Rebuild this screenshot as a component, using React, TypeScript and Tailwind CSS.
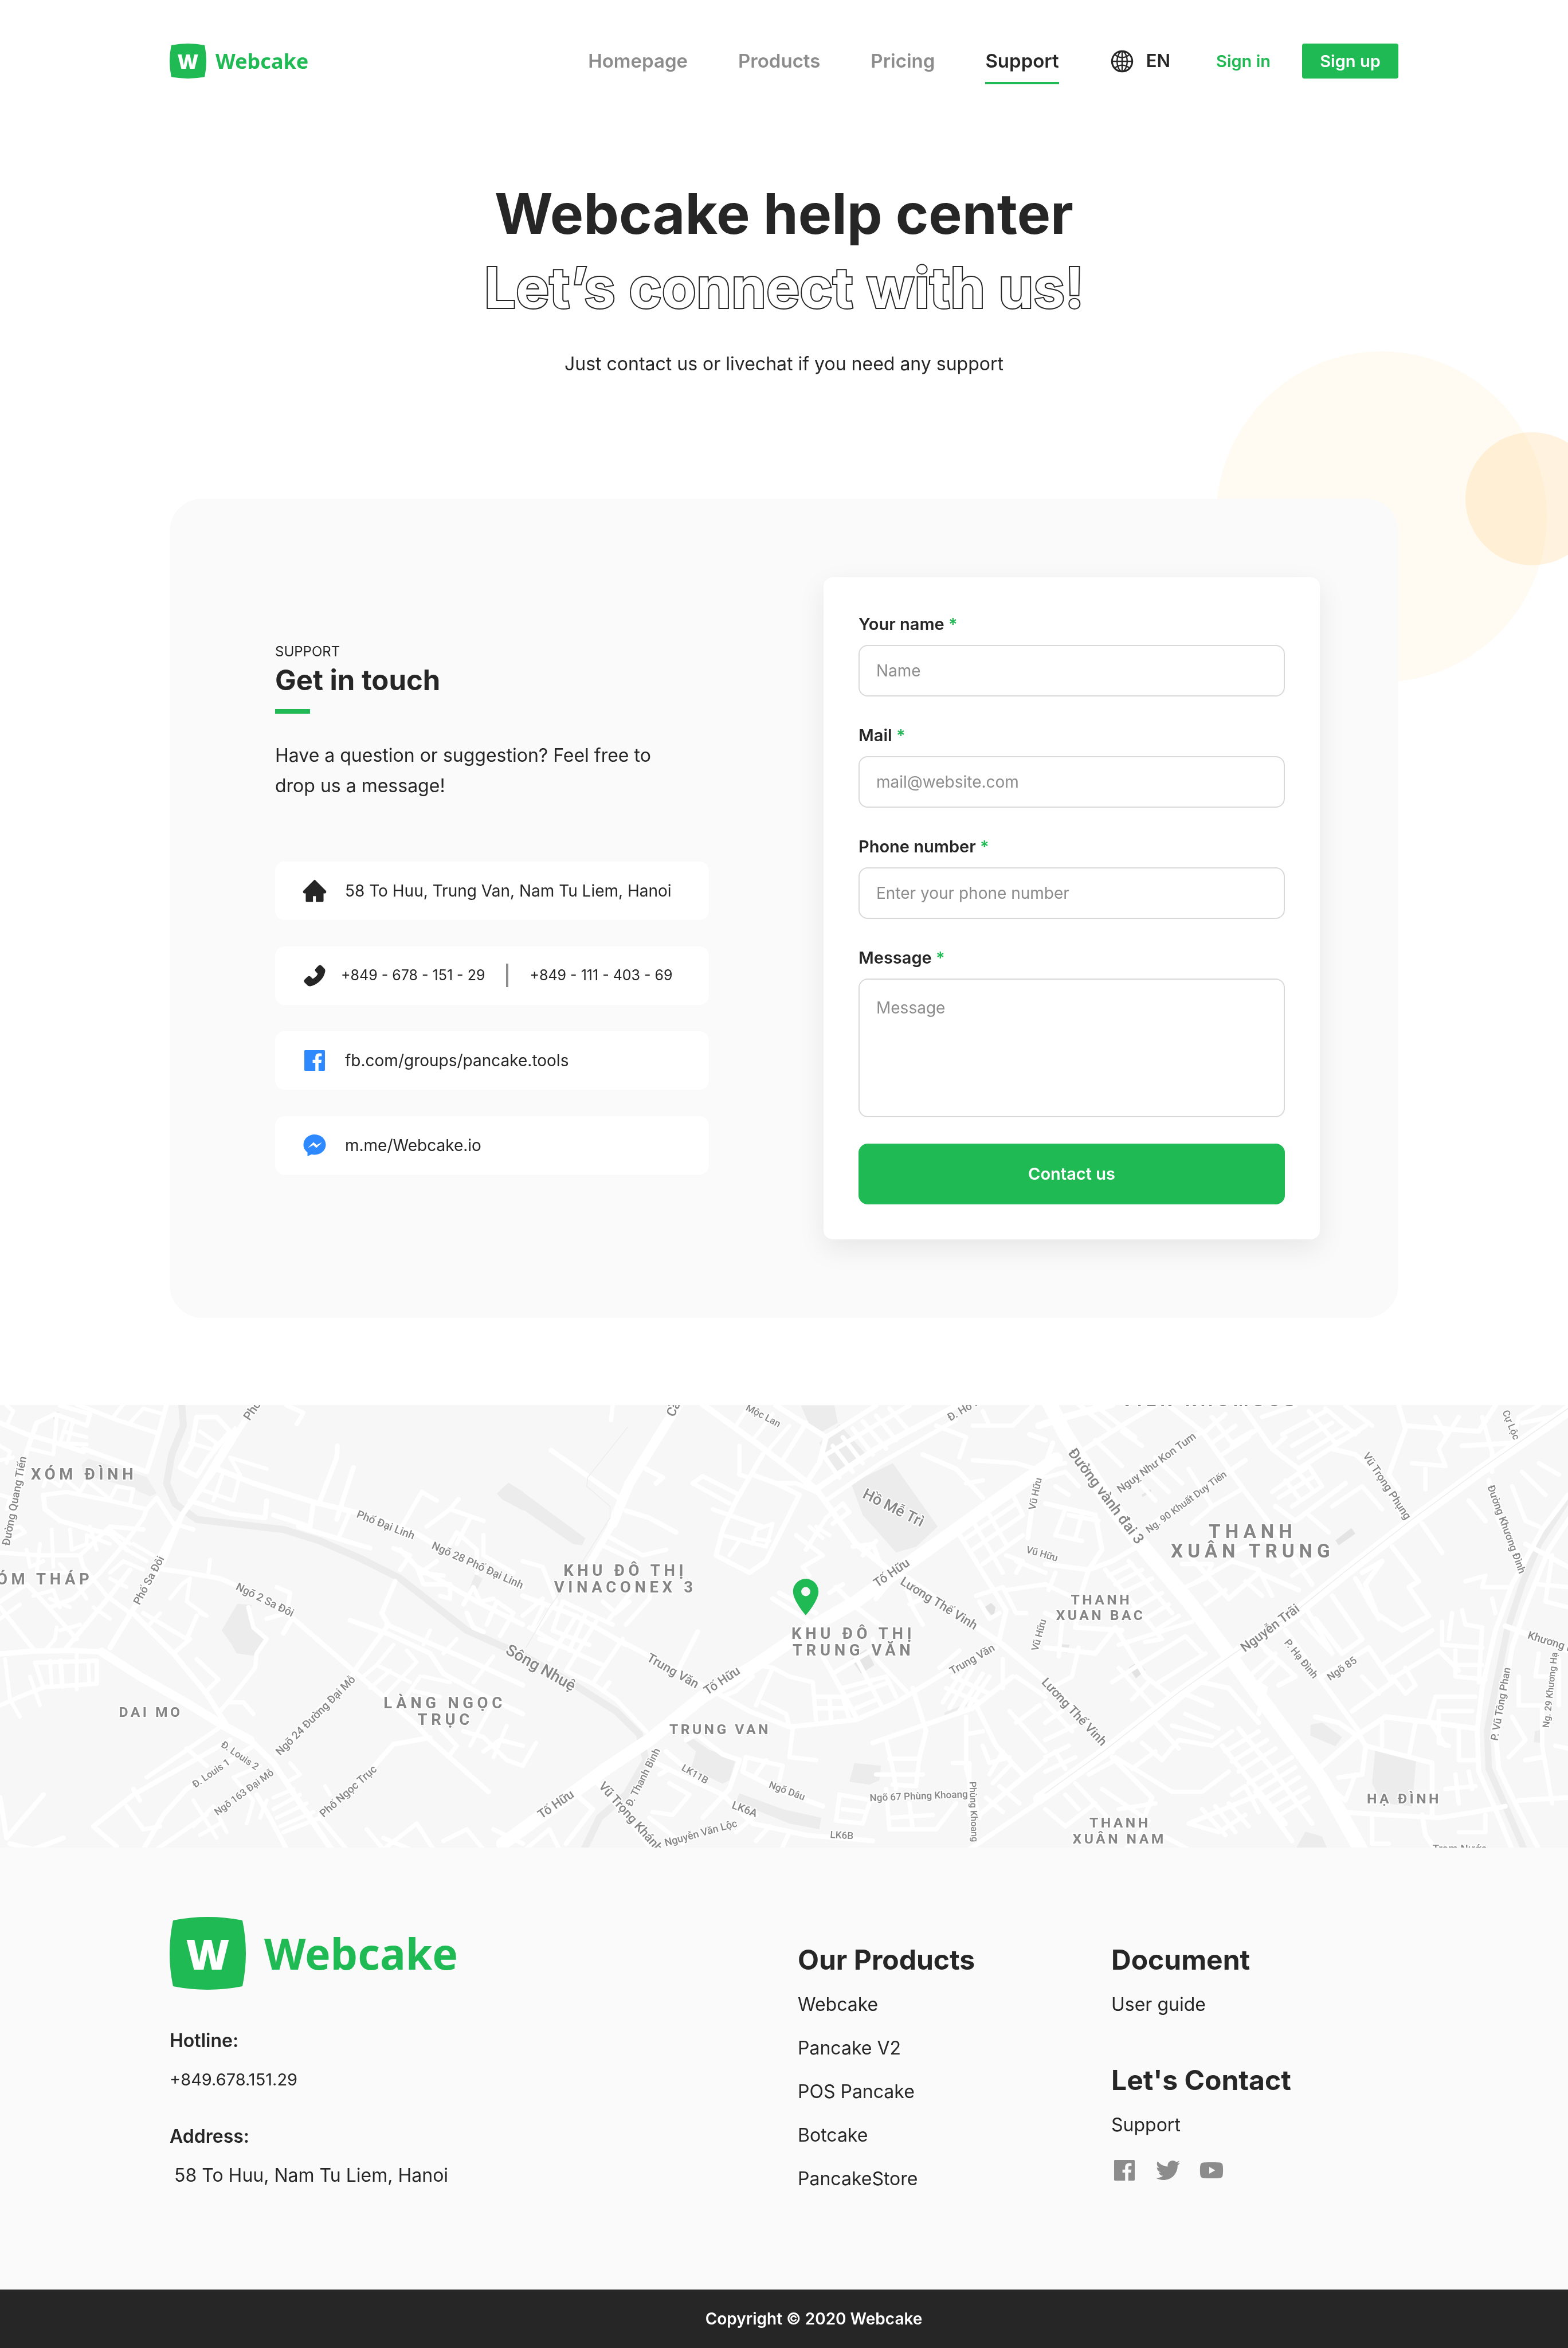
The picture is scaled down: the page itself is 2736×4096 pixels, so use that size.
import type { ReactNode } from "react";
import {
  AiFillFacebook,
  AiFillHome,
  AiFillPhone,
  AiFillYoutube,
  AiOutlineGlobal,
} from "react-icons/ai";
import { FaTwitter } from "react-icons/fa";
import { MdLocationOn } from "react-icons/md";

/* ---------- logo ---------- */

function Logo({ large = false }: { large?: boolean }) {
  return (
    <a href="#" className={large ? "flex items-center gap-8" : "flex items-center gap-4"}>
      <span className={large ? "relative h-[127px] w-[133px]" : "relative h-[61px] w-16"}>
        <svg viewBox="0 0 140 134" preserveAspectRatio="none" className="size-full" aria-hidden="true">
          <path
            d="M8 8Q70 -4 132 8Q144 67 132 126Q70 138 8 126Q-4 67 8 8Z"
            fill="#1fba54"
            stroke="#1fba54"
            strokeWidth="4"
            strokeLinejoin="round"
          />
        </svg>
        <span
          className={
            large
              ? "absolute inset-0 flex items-center justify-center font-['Open_Sans'] text-[73px] leading-none font-extrabold text-white"
              : "absolute inset-0 flex items-center justify-center font-['Open_Sans'] text-[35px] leading-none font-extrabold text-white"
          }
        >
          W
        </span>
      </span>
      <span
        className={
          large
            ? "font-['Noto_Sans'] text-[75px] leading-none font-bold text-[#1fba54]"
            : "font-['Noto_Sans'] text-[36px] leading-none font-bold text-[#1fba54]"
        }
      >
        Webcake
      </span>
    </a>
  );
}

/* ---------- header ---------- */

function Header() {
  return (
    <header className="mx-auto flex h-[61px] w-full max-w-[2144px] items-center text-[33px] font-semibold text-[#262626]">
      <Logo />
      <nav className="ml-auto flex items-center gap-[88px] text-[#8c8c8c]">
        <a href="#">Homepage</a>
        <a href="#">Products</a>
        <a href="#">Pricing</a>
        <a href="#" className="relative text-[#262626]" aria-current="page">
          Support
          <span className="absolute inset-x-0 -bottom-4 h-1 bg-[#1fba54]" />
        </a>
      </nav>
      <button type="button" className="ml-[88px] flex items-center gap-5 text-[31px]">
        <AiOutlineGlobal className="size-[44px]" />
        EN
      </button>
      <a href="#" className="ml-[80px] text-[29px] text-[#1fba54]">
        Sign in
      </a>
      <button
        type="button"
        className="ml-[55px] h-[61px] w-[168px] rounded bg-[#1fba54] text-[29px] text-white"
      >
        Sign up
      </button>
    </header>
  );
}

/* ---------- contact ---------- */

function MessengerIcon() {
  return (
    <svg viewBox="0 0 46 46" className="size-[46px] text-[#2e89ff]" aria-hidden="true">
      <path
        d="M23 4C12 4 3.500 11.800 3.500 22c0 5.500 2.700 10 7 13.200V42l7.200-3.300c1.700.5 3.500.7 5.300.7 11 0 19.500-7.700 19.500-17.400S34 4 23 4Z"
        fill="currentColor"
      />
      <path d="m11 27.500 10-10 5.500 5L36 17.500 26 27.500l-5.200-5Z" fill="#fff" />
    </svg>
  );
}

function InfoRow({ icon, children, tight = false }: { icon: ReactNode; children: ReactNode; tight?: boolean }) {
  return (
    <li
      className={
        tight
          ? "flex h-[102px] items-center gap-[23px] rounded-2xl bg-white pl-[46px] text-[25px]"
          : "flex h-[102px] items-center gap-[30px] rounded-2xl bg-white pl-[46px] text-[28px]"
      }
    >
      {icon}
      {children}
    </li>
  );
}

function GetInTouch() {
  return (
    <div className="w-[757px] self-center">
      <p className="text-[24px] leading-[32px]">SUPPORT</p>
      <h2 className="mt-[2px] text-[49px] leading-[64px] font-bold">Get in touch</h2>
      <div className="mt-[18px] h-2 w-[61px] bg-[#1fba54]" />
      <p className="mt-[46px] w-[680px] text-[32px] leading-[53px]">
        Have a question or suggestion? Feel free to drop us a message!
      </p>
      <ul className="mt-[106px] flex flex-col gap-[46px]">
        <InfoRow icon={<AiFillHome className="size-[46px]" />}>58 To Huu, Trung Van, Nam Tu Liem, Hanoi</InfoRow>
        <InfoRow tight icon={<AiFillPhone className="size-[46px]" />}>
          <span>+849 - 678 - 151 - 29</span>
          <span className="mx-3.5 h-[41px] w-1 bg-[#8c8c8c]" />
          <span>+849 - 111 - 403 - 69</span>
        </InfoRow>
        <InfoRow icon={<AiFillFacebook className="size-[46px] text-[#2e89ff]" />}>
          <a href="#">fb.com/groups/pancake.tools</a>
        </InfoRow>
        <InfoRow icon={<MessengerIcon />}>
          <a href="#">m.me/Webcake.io</a>
        </InfoRow>
      </ul>
    </div>
  );
}

function FieldLabel({ id, children }: { id: string; children: ReactNode }) {
  return (
    <label htmlFor={id} className="mb-[15px] block text-[29px] leading-[42px] font-semibold">
      {children} <span className="text-[#1fba54]">*</span>
    </label>
  );
}

const fields = [
  { id: "name", label: "Your name", type: "text", placeholder: "Name" },
  { id: "mail", label: "Mail", type: "email", placeholder: "mail@website.com" },
  { id: "phone", label: "Phone number", type: "tel", placeholder: "Enter your phone number" },
];

function ContactForm() {
  return (
    <form className="w-[866px] rounded-2xl bg-white p-[61px] shadow-[0_16px_48px_rgba(0,0,0,0.08)]">
      {fields.map((f) => (
        <div key={f.id} className="mb-[47px]">
          <FieldLabel id={f.id}>{f.label}</FieldLabel>
          <input
            id={f.id}
            type={f.type}
            placeholder={f.placeholder}
            className="block h-[90px] w-full rounded-2xl border-2 border-[#d9d9d9] px-[29px] text-[28px] placeholder:text-[#8c8c8c]"
          />
        </div>
      ))}
      <FieldLabel id="message">Message</FieldLabel>
      <textarea
        id="message"
        placeholder="Message"
        className="block h-[242px] w-full resize-none rounded-2xl border-2 border-[#d9d9d9] px-[29px] py-[28px] text-[28px] leading-[42px] placeholder:text-[#8c8c8c]"
      />
      <button
        type="button"
        className="mt-[46px] block h-[106px] w-full rounded-2xl bg-[#1fba54] text-[29px] font-semibold text-white"
      >
        Contact us
      </button>
    </form>
  );
}

/* ---------- map ---------- */

const SX = 0.6124;
const SY = 0.5294;
// Each tile is 960 units wide on the map; its geometry is kept on a 1568 grid.
const px = (tile: number, x: number) => tile * 960 + x * SX;
const py = (y: number) => (y - 18) * SY;
const line = (tile: number, s: string) =>
  s
    .split(" ")
    .map((p) => {
      const [x, y] = p.split(",").map(Number);
      return `${px(tile, x).toFixed(1)},${py(y).toFixed(1)}`;
    })
    .join(" ");

const areas: [number, string, string][] = [
  [0, "#ececec", "665,800 712,708 755,712 745,760 792,830 760,888 710,880 690,840"],
  [0, "#efefef", "245,225 265,205 440,268 470,325 450,335 380,300 250,260"],
  [0, "#ececec", "1490,325 1525,288 1570,320 1570,385 1505,345"],
  [0, "#ececec", "1425,605 1448,620 1425,672 1405,665"],
  [0, "#ececec", "160,45 178,40 172,70 160,68"],
  [1, "#ececec", "0,320 188,480 178,505 150,500 0,380"],
  [1, "#ececec", "985,290 1110,220 1245,440 1180,510 1120,530 1020,400"],
  [1, "#ececec", "835,20 935,20 945,80 900,110 860,90"],
  [1, "#ececec", "890,150 950,85 1030,190 950,265"],
  [1, "#e6e6e6", "985,900 1030,865 1055,920 1015,950"],
  [1, "#e2e2e2", "1385,720 1405,705 1418,720 1412,755"],
  [1, "#ececec", "490,1190 505,1170 560,1215 640,1245 620,1320 600,1332 505,1280 520,1220"],
  [1, "#ececec", "995,1260 1075,1270 1070,1320 1040,1335 980,1325"],
  [1, "#ececec", "650,1365 780,1420 895,1450 890,1490 800,1470 640,1395"],
  [1, "#ececec", "1265,1085 1358,1042 1358,1050 1265,1095"],
  [2, "#e4e4e4", "870,488 918,445 930,465 880,505"],
  [2, "#e2e2e2", "250,930 278,908 300,938 272,966"],
  [2, "#e6e6e6", "48,848 72,850 66,880 44,874"],
  [2, "#ececec", "795,1128 830,1120 890,1170 870,1202 795,1165"],
  [2, "#ececec", "990,1205 1112,1250 1100,1410 1010,1400 980,1330"],
  [2, "#ececec", "745,1570 780,1498 830,1515 850,1570"],
  [2, "#e6e6e6", "288,330 315,310 318,318 292,338"],
  [2, "#ececec", "1468,1150 1485,1145 1485,1190 1465,1188"],
];

const rivers: [number, number, string][] = [
  [0, 13, "545,16 550,90 515,190 500,290 525,360 590,415 700,430 850,450 960,490 1080,550 1200,620 1300,710 1400,800 1570,888"],
  [1, 13, "0,886 150,985 280,1080 350,1160 370,1250 310,1370 230,1450 180,1570"],
  [2, 12, "1570,340 1480,500 1430,640 1385,800 1350,1000 1325,1150 1330,1280 1380,1410 1440,1570"],
];

const roads: [number, number, string][] = [
  // west
  [0, 15, "305,875 420,960 550,1045 670,1130 750,1180"],
  [0, 10, "750,1180 820,1260 900,1400 1000,1570"],
  [0, 9, "0,882 100,872 220,870 305,875"],
  [0, 9, "770,16 730,80 640,250 545,400 490,560 395,735 330,860"],
  [0, 6, "705,100 600,300 530,430 470,560"],
  [0, 9, "395,735 520,880 620,1020 680,1130"],
  [0, 8, "470,585 560,600 660,620 740,660 860,740 1060,940 1250,1130 1290,1180 1465,1360"],
  [0, 8, "1290,1172 1180,1195 1100,1300 960,1440"],
  [0, 8, "1065,945 830,1230"],
  [0, 7, "1060,945 1165,780 1145,740 1185,630"],
  [0, 7, "1050,765 1170,815 1290,880 1330,950 1440,1020 1568,1090"],
  [0, 7, "1160,780 1370,885 1568,990"],
  [0, 9, "640,235 760,290 940,355 1100,400 1250,465 1330,520"],
  [0, 8, "1200,520 1250,580 1430,700 1568,780"],
  [0, 7, "960,350 1010,200 1012,160"],
  [0, 7, "1060,235 1010,415"],
  [0, 7, "940,355 930,440 820,400"],
  [0, 7, "895,440 980,470 1110,515"],
  [0, 6, "1045,400 1015,480"],
  [0, 6, "1200,450 1265,320 1310,350"],
  [0, 6, "1280,440 1350,380 1375,345"],
  [0, 6, "1350,380 1450,420"],
  [0, 6, "1370,500 1410,410"],
  [0, 6, "1340,520 1370,460 1430,520 1430,600"],
  [0, 6, "1450,470 1450,540 1540,600"],
  [0, 6, "1180,515 1230,540 1200,590"],
  [0, 6, "1250,580 1270,640 1350,640 1350,690 1320,680"],
  [0, 6, "1310,560 1260,600 1330,610"],
  [0, 6, "1390,710 1420,650 1440,700 1480,690"],
  [0, 6, "1460,780 1490,700 1540,740 1500,820"],
  [0, 6, "1530,640 1568,650"],
  [0, 7, "540,235 590,265 625,200 690,110 650,60 590,60 575,160 540,235"],
  [0, 5, "570,150 630,170"],
  [0, 5, "600,110 650,150 630,200"],
  [0, 7, "570,350 690,395 795,410 800,350"],
  [0, 5, "600,310 700,350 720,260 690,200 800,240"],
  [0, 5, "640,350 670,250"],
  [0, 8, "500,16 470,140 440,250 250,170"],
  [0, 6, "230,16 350,70 470,115"],
  [0, 5, "340,60 370,16"],
  [0, 5, "390,80 430,30 490,50"],
  [0, 7, "0,80 80,120 170,150 250,180"],
  [0, 7, "110,80 80,180 60,300 20,480"],
  [0, 6, "110,80 165,50 260,90 270,50 180,20"],
  [0, 5, "170,60 160,190 90,170"],
  [0, 5, "200,80 180,150 260,155"],
  [0, 5, "190,110 260,130"],
  [0, 5, "220,70 205,140"],
  [0, 5, "0,160 30,180 20,220"],
  [0, 5, "0,210 40,200"],
  [0, 5, "0,330 30,340 20,380"],
  [0, 5, "20,20 40,40 20,90"],
  [0, 7, "130,330 135,380 180,420 270,450 330,465 380,520"],
  [0, 6, "130,330 200,320 330,350 440,380 470,340 520,430 580,450"],
  [0, 6, "440,380 430,410 380,490 300,600 220,690 150,720"],
  [0, 5, "130,300 140,270 180,300 190,270 240,320 260,280 330,345"],
  [0, 5, "330,345 350,300 400,310 390,360"],
  [0, 6, "0,530 120,540 240,540 330,440 430,450"],
  [0, 6, "240,540 250,580 320,680 390,740"],
  [0, 6, "0,700 80,640 130,700 230,830"],
  [0, 7, "390,590 330,680 200,860"],
  [0, 6, "0,720 100,865"],
  [0, 5, "170,790 165,830 135,870"],
  [0, 5, "120,500 110,600 200,600"],
  [0, 5, "155,450 160,580"],
  [0, 5, "80,520 90,580 130,560"],
  [0, 5, "180,570 230,640 260,690"],
  [0, 5, "210,450 215,520 260,500 260,470 330,500"],
  [0, 5, "270,440 290,520"],
  [0, 5, "380,520 440,560"],
  [0, 5, "400,500 460,540"],
  [0, 5, "330,450 390,500"],
  [0, 5, "40,480 75,460 60,440 20,450"],
  [0, 5, "330,600 370,560 430,590"],
  [0, 5, "330,620 380,650"],
  [0, 5, "280,720 330,760"],
  [0, 5, "100,680 160,660 180,720"],
  [0, 5, "150,690 210,720"],
  [0, 5, "180,800 240,780"],
  [0, 5, "0,760 60,710"],
  [0, 5, "0,640 60,600"],
  [0, 5, "510,690 545,640 570,620 560,700 620,750 600,740"],
  [0, 6, "430,740 560,830 590,750"],
  [0, 5, "440,790 480,740"],
  [0, 6, "520,880 570,830"],
  [0, 6, "590,900 655,970 620,1010"],
  [0, 6, "745,720 760,790 800,830 770,880 765,930 690,1040 660,1080"],
  [0, 6, "690,1050 730,1050 760,1090"],
  [0, 5, "625,600 630,555"],
  [0, 6, "830,650 870,670 860,740 800,760"],
  [0, 7, "850,810 870,770"],
  [0, 6, "105,912 290,905 290,985 130,997 105,912"],
  [0, 5, "150,905 155,995"],
  [0, 7, "182,905 187,995"],
  [0, 5, "230,880 230,1005"],
  [0, 5, "265,905 268,985"],
  [0, 5, "90,960 120,1060"],
  [0, 6, "0,1060 80,1020 140,995"],
  [0, 5, "15,900 30,1040 60,1100"],
  [0, 6, "655,1140 440,1310"],
  [0, 7, "690,1180 400,1370 280,1480 350,1550"],
  [0, 7, "760,1200 560,1350 490,1440 430,1560"],
  [0, 6, "380,1410 430,1490 480,1480"],
  [0, 6, "400,1350 420,1390"],
  [0, 6, "560,1210 620,1270"],
  [0, 6, "470,1560 620,1440"],
  [0, 5, "580,1390 650,1520"],
  [0, 5, "580,1480 640,1410 680,1500"],
  [0, 5, "600,1510 660,1470"],
  [0, 7, "770,1370 810,1450 860,1560"],
  [0, 5, "740,1470 760,1390 700,1310 780,1270"],
  [0, 5, "780,1450 800,1390"],
  [0, 5, "820,1380 880,1350"],
  [0, 5, "820,1420 900,1370"],
  [0, 5, "830,1450 920,1400"],
  [0, 5, "840,1480 940,1430"],
  [0, 6, "850,1500 960,1450 1040,1560"],
  [0, 5, "870,1260 900,1300 870,1320"],
  [0, 5, "975,1340 990,1370"],
  [0, 7, "20,1520 0,1380"],
  [0, 7, "20,1520 130,1370"],
  [0, 7, "30,1540 100,1560 190,1520"],
  [0, 6, "1100,1490 1150,1560 1250,1470 1300,1560"],
  [0, 6, "1150,1520 1230,1560"],
  [0, 6, "1330,1530 1400,1490 1450,1560"],
  [0, 6, "1480,1490 1568,1540"],
  [0, 6, "1390,1150 1450,1170 1520,1250 1568,1270"],
  [0, 6, "1450,1220 1500,1180 1568,1200"],
  [0, 6, "1320,1140 1370,1200 1350,1230"],
  [0, 5, "1090,960 1130,920 1230,980"],
  [0, 5, "1110,1000 1170,940"],
  [0, 5, "1150,1030 1250,910 1220,870"],
  [0, 5, "1200,1060 1260,960"],
  [0, 5, "1180,850 1130,920"],
  [0, 5, "1240,1010 1320,1030"],
  [0, 5, "1270,960 1350,980"],
  [0, 5, "1410,1200 1480,1050"],
  [0, 5, "1420,980 1480,890"],
  [0, 5, "1270,850 1290,800"],
  [0, 5, "1330,880 1370,830"],
  [0, 5, "1520,1130 1480,1240"],
  [0, 6, "860,20 910,45 890,85"],
  [0, 7, "1400,740 1420,790 1450,805"],
  // centre
  [1, 23, "-60,1540 120,1390 250,1280 380,1180 540,1030 700,920 850,800 1000,700 1130,590 1300,450 1420,350 1600,205"],
  [1, 17, "470,10 400,140 320,290 270,430"],
  [1, 12, "270,430 200,570"],
  [1, 10, "540,16 700,150 880,310 1000,500 1120,610"],
  [1, 10, "880,310 1060,170 1310,16"],
  [1, 6, "915,345 1080,215 1300,70"],
  [1, 9, "760,20 910,130 890,220 850,290"],
  [1, 7, "910,130 1060,20"],
  [1, 7, "850,80 780,210"],
  [1, 5, "640,90 680,20"],
  [1, 5, "690,140 750,50"],
  [1, 5, "740,170 800,90"],
  [1, 6, "900,190 950,270"],
  [1, 6, "930,160 990,250"],
  [1, 6, "960,130 1020,220"],
  [1, 6, "990,100 1050,190"],
  [1, 6, "1020,75 1090,170"],
  [1, 6, "1060,55 1120,140"],
  [1, 6, "1100,30 1160,110"],
  [1, 6, "910,190 1100,60 1160,20"],
  [1, 7, "85,175 300,350"],
  [1, 7, "310,385 380,410 460,460"],
  [1, 7, "370,240 420,270 400,290"],
  [1, 6, "270,20 265,70"],
  [1, 7, "720,190 640,350 600,450 580,540 680,600 730,560 830,330 760,290 690,260"],
  [1, 6, "760,290 820,290 880,320"],
  [1, 6, "510,290 540,265 650,330"],
  [1, 6, "510,290 620,360"],
  [1, 6, "570,380 720,440"],
  [1, 6, "650,160 650,260 680,270"],
  [1, 5, "690,500 700,450 750,430 730,510 600,470"],
  [1, 5, "620,540 650,490"],
  [1, 5, "690,480 740,490"],
  [1, 6, "820,470 900,540"],
  [1, 6, "850,520 910,410 960,360 980,390 930,430"],
  [1, 6, "900,540 840,580 860,610"],
  [1, 5, "880,440 920,470"],
  [1, 5, "860,440 900,480"],
  [1, 6, "990,510 1050,500 1070,560"],
  [1, 6, "1020,540 1060,490"],
  [1, 8, "1200,190 1300,240 1380,340"],
  [1, 6, "1240,90 1330,130 1310,200"],
  [1, 6, "1350,90 1470,90 1530,20"],
  [1, 6, "1380,40 1400,90"],
  [1, 6, "1350,210 1480,220 1568,250"],
  [1, 7, "1520,120 1568,140"],
  [1, 6, "1330,290 1380,280"],
  [1, 8, "750,690 860,770"],
  [1, 7, "770,670 880,740"],
  [1, 7, "940,650 1000,720 1080,790"],
  [1, 6, "920,670 960,640"],
  [1, 7, "1110,620 1060,690"],
  [1, 8, "300,840 380,890 540,990 680,1080 800,1135 1000,1110 1120,1050 1290,930 1420,860"],
  [1, 8, "0,680 160,750 310,850"],
  [1, 7, "470,930 525,805"],
  [1, 6, "310,780 380,690 390,640"],
  [1, 6, "250,470 360,540 430,520"],
  [1, 6, "230,500 340,560"],
  [1, 6, "0,560 60,580 100,700 40,800"],
  [1, 6, "20,790 110,850 220,910"],
  [1, 6, "0,750 60,690"],
  [1, 6, "160,750 80,900"],
  [1, 6, "60,720 30,790"],
  [1, 6, "50,830 150,870"],
  [1, 6, "120,700 90,800 200,850"],
  [1, 6, "190,740 140,870"],
  [1, 6, "240,700 280,740 320,700"],
  [1, 6, "260,760 330,660"],
  [1, 6, "220,770 130,940 210,985 300,830"],
  [1, 6, "160,880 240,920"],
  [1, 6, "120,700 270,780"],
  [1, 6, "210,985 280,1040 370,1150"],
  [1, 6, "240,1010 260,980"],
  [1, 6, "700,920 750,930 700,1060"],
  [1, 6, "640,1010 690,960 670,930"],
  [1, 6, "600,1030 640,1010"],
  [1, 6, "750,930 800,960"],
  [1, 6, "800,960 870,980 880,1110"],
  [1, 6, "880,1030 960,1030 980,1110"],
  [1, 6, "880,1070 970,1070"],
  [1, 6, "720,1050 790,1090 800,1135"],
  [1, 6, "920,1030 925,1110"],
  [1, 8, "900,890 1000,1100"],
  [1, 6, "980,850 1080,1070"],
  [1, 6, "930,950 1060,860 1050,830"],
  [1, 6, "960,1000 1090,960 1120,1030"],
  [1, 6, "970,1030 1100,980"],
  [1, 6, "1000,1070 1060,1040"],
  [1, 6, "1060,900 1150,1010"],
  [1, 7, "1050,1190 1200,1130 1350,1070 1470,960"],
  [1, 7, "1170,1000 1210,1150 1190,1240"],
  [1, 6, "1090,1180 1110,1280 1120,1350"],
  [1, 6, "1100,1245 1190,1245"],
  [1, 6, "1060,1300 1200,1300"],
  [1, 6, "1190,1240 1180,1340 1110,1335"],
  [1, 10, "1130,600 1300,740 1440,850 1568,975"],
  [1, 8, "1300,450 1380,600 1450,730 1430,830"],
  [1, 6, "1350,420 1440,600"],
  [1, 6, "1350,520 1500,400 1470,330"],
  [1, 6, "1380,570 1500,470"],
  [1, 6, "1400,400 1450,500"],
  [1, 6, "1330,480 1480,360"],
  [1, 6, "1450,540 1500,560 1480,600"],
  [1, 8, "1590,150 1530,350 1515,480"],
  [1, 6, "1480,560 1568,600"],
  [1, 6, "1450,660 1568,640"],
  [1, 6, "1360,680 1440,650 1480,740 1510,740"],
  [1, 6, "1370,700 1400,760 1430,740"],
  [1, 6, "1150,650 1170,720 1200,780"],
  [1, 6, "1160,710 1200,690"],
  [1, 7, "1360,1060 1420,1200 1500,1300"],
  [1, 6, "1280,1070 1350,930"],
  [1, 6, "1260,1050 1320,940"],
  [1, 6, "1310,1080 1380,950"],
  [1, 6, "1340,1060 1400,960"],
  [1, 6, "1270,1000 1370,1050"],
  [1, 6, "1290,960 1400,1020"],
  [1, 6, "1250,930 1310,870"],
  [1, 6, "1480,960 1568,1030"],
  [1, 6, "1440,1000 1440,900"],
  [1, 6, "1330,1100 1330,1280 1370,1450"],
  [1, 6, "1330,1160 1380,1150"],
  [1, 6, "1380,1200 1400,1260 1460,1240"],
  [1, 6, "1400,1300 1440,1220"],
  [1, 6, "1410,1330 1460,1270"],
  [1, 6, "1460,1080 1568,1220"],
  [1, 6, "1480,1120 1550,1060"],
  [1, 7, "1370,1440 1480,1330 1568,1250"],
  [1, 7, "1340,1560 1568,1380"],
  [1, 6, "1390,1380 1440,1430"],
  [1, 6, "1430,1340 1490,1400"],
  [1, 6, "1290,1260 1340,1260 1340,1440"],
  [1, 7, "430,1220 480,1270"],
  [1, 7, "400,1260 470,1300 600,1370"],
  [1, 6, "410,1300 440,1280"],
  [1, 7, "490,1180 520,1160 600,1230 650,1250 620,1350 540,1450"],
  [1, 7, "670,1240 660,1290 780,1360 900,1410"],
  [1, 6, "670,1240 780,1270 770,1320"],
  [1, 6, "700,1300 730,1250"],
  [1, 6, "810,1140 800,1240 880,1250"],
  [1, 7, "600,1370 690,1470 850,1510 1050,1530"],
  [1, 6, "640,1500 700,1440"],
  [1, 6, "700,1530 740,1480"],
  [1, 6, "780,1550 800,1500"],
  [1, 6, "950,1370 940,1460 1020,1470 1040,1400"],
  [1, 6, "960,1420 1030,1430"],
  [1, 6, "950,1370 1050,1390"],
  [1, 6, "1090,1350 1100,1490 1240,1490 1300,1400"],
  [1, 6, "1160,1400 1170,1490"],
  [1, 6, "1100,1450 1230,1440"],
  [1, 8, "210,1310 300,1430 390,1560"],
  [1, 7, "170,1380 210,1420 130,1540"],
  [1, 6, "390,1430 450,1440 500,1370 440,1330"],
  [1, 6, "380,1450 480,1540"],
  [1, 6, "0,1568 80,1490 110,1560"],
  [1, 6, "40,1190 0,1270"],
  // east
  [2, 26, "-20,-60 60,120 200,370 300,520 430,700 560,900 700,1120 830,1320 960,1590"],
  [2, 12, "-20,90 60,60 200,16"],
  [2, 20, "-20,1385 180,1220 400,1020 560,890 750,740 900,600 1100,420 1300,250 1590,20"],
  [2, 10, "0,970 100,1090 200,1220"],
  [2, 7, "100,16 200,110 120,170"],
  [2, 7, "200,110 330,20"],
  [2, 6, "150,20 270,130"],
  [2, 6, "230,110 290,160"],
  [2, 6, "150,140 230,230"],
  [2, 6, "260,260 330,350"],
  [2, 6, "290,230 370,320"],
  [2, 6, "330,200 410,290"],
  [2, 8, "370,20 470,110 600,320 700,470 800,640"],
  [2, 8, "470,110 230,300"],
  [2, 7, "600,210 310,440"],
  [2, 6, "430,240 500,370 440,430"],
  [2, 6, "500,370 590,310"],
  [2, 8, "590,20 680,170 760,240 960,90"],
  [2, 6, "640,100 560,160"],
  [2, 6, "500,60 560,150 620,110"],
  [2, 6, "480,110 540,50"],
  [2, 6, "500,150 570,90"],
  [2, 6, "530,190 610,130"],
  [2, 6, "680,170 720,130"],
  [2, 6, "650,60 750,20"],
  [2, 6, "790,40 870,150 940,110"],
  [2, 6, "710,120 840,40"],
  [2, 6, "740,160 860,80"],
  [2, 6, "760,200 900,100"],
  [2, 6, "840,30 930,120"],
  [2, 6, "900,20 980,90"],
  [2, 6, "680,320 790,230 830,300 740,370"],
  [2, 6, "700,340 800,270"],
  [2, 6, "720,280 760,340"],
  [2, 6, "760,255 800,310"],
  [2, 8, "690,370 750,420 900,290"],
  [2, 6, "790,400 850,460"],
  [2, 6, "860,370 950,300 1010,380"],
  [2, 8, "860,170 930,190 1000,260 1080,420"],
  [2, 8, "1060,20 1080,100 1030,260 1060,310"],
  [2, 7, "1080,90 1300,110 1350,20"],
  [2, 6, "1100,220 1200,230 1180,170 1240,60"],
  [2, 6, "1140,240 1140,310"],
  [2, 6, "1170,60 1200,120"],
  [2, 7, "1250,160 1400,150 1500,100"],
  [2, 6, "1340,180 1340,250"],
  [2, 6, "1310,60 1340,180"],
  [2, 6, "1400,150 1420,60 1480,20"],
  [2, 6, "1430,80 1520,60"],
  [2, 7, "1270,350 1320,420"],
  [2, 7, "1130,430 1190,530"],
  [2, 8, "1330,280 1360,420 1430,560"],
  [2, 6, "1400,300 1440,420 1480,440"],
  [2, 6, "1430,250 1500,330"],
  [2, 6, "1480,220 1540,260"],
  [2, 7, "1568,330 1490,450 1400,640 1350,800 1310,1000 1295,1150 1300,1290 1350,1420 1400,1560"],
  [2, 7, "1590,380 1510,520 1440,720 1400,860 1380,1000 1350,1150 1360,1280 1410,1400 1480,1560"],
  [2, 9, "1380,785 1460,820 1590,880"],
  [2, 7, "1440,500 1568,580"],
  [2, 6, "1520,540 1500,700 1568,720"],
  [2, 6, "1480,640 1568,650"],
  [2, 6, "1260,630 1320,610 1310,650 1390,650"],
  [2, 8, "930,620 990,740 1070,800 1150,750 1090,650 1120,630 1040,510"],
  [2, 7, "950,600 1010,560 960,640 1000,760"],
  [2, 7, "860,680 950,830 890,880 810,760"],
  [2, 6, "770,770 860,880"],
  [2, 7, "860,880 780,720"],
  [2, 7, "640,840 750,960 700,990"],
  [2, 6, "640,980 700,910 660,870"],
  [2, 6, "620,950 690,880"],
  [2, 7, "720,800 820,960 940,1150"],
  [2, 7, "830,960 970,860 1040,980 920,1080"],
  [2, 6, "950,960 1000,1020"],
  [2, 6, "1010,920 1160,800"],
  [2, 6, "1050,960 1180,870 1240,940"],
  [2, 6, "1080,930 1110,990"],
  [2, 6, "1040,960 1080,1020 1110,990"],
  [2, 9, "820,1280 940,1160 1020,1100 1160,1120 1290,1140"],
  [2, 7, "810,1100 880,1120 940,1170"],
  [2, 6, "1010,1120 1010,1200"],
  [2, 7, "940,1160 960,1200 1160,1260 1160,1440"],
  [2, 8, "890,1430 1020,1440 1180,1450 1290,1430 1380,1410"],
  [2, 7, "880,1310 950,1300 960,1210"],
  [2, 6, "860,1350 900,1390 930,1300"],
  [2, 7, "1130,1440 1140,1510 1170,1560"],
  [2, 6, "980,1440 980,1540 1030,1540"],
  [2, 6, "900,1450 910,1500"],
  [2, 6, "1240,1500 1320,1500 1320,1440"],
  [2, 6, "1110,1120 1090,1240"],
  [2, 6, "1170,1030 1290,1030"],
  [2, 6, "1170,1030 1150,1110 1200,1200"],
  [2, 6, "1180,1080 1180,1190 1210,1200"],
  [2, 6, "1180,1080 1280,1080"],
  [2, 6, "1240,1140 1240,1250 1290,1250"],
  [2, 6, "1200,1350 1290,1340"],
  [2, 6, "1230,1300 1240,1400"],
  [2, 6, "1270,1290 1280,1350"],
  [2, 6, "1190,770 1190,850 1310,860"],
  [2, 6, "1250,730 1260,780 1310,790 1300,980"],
  [2, 6, "1220,740 1210,830"],
  [2, 6, "1340,690 1350,740"],
  [2, 6, "1230,870 1230,960 1320,970"],
  [2, 6, "1240,920 1310,920"],
  [2, 6, "1480,880 1470,960 1540,960"],
  [2, 6, "1420,960 1420,1060 1500,1060"],
  [2, 6, "1440,1060 1490,1060 1490,1200 1520,1400"],
  [2, 6, "1400,1100 1440,1180 1390,1240"],
  [2, 6, "1540,900 1540,1060"],
  [2, 7, "1420,1390 1568,1380"],
  [2, 7, "1490,1240 1440,1250"],
  [2, 6, "1530,1200 1568,1210"],
  [2, 8, "0,570 130,590 200,560 290,500"],
  [2, 8, "130,590 100,700 90,790 230,800"],
  [2, 7, "0,360 150,400 170,520 130,590"],
  [2, 6, "60,380 30,470 110,490"],
  [2, 6, "70,400 160,420"],
  [2, 6, "110,400 90,480"],
  [2, 6, "0,270 60,250 100,300"],
  [2, 6, "30,300 70,330"],
  [2, 6, "10,230 60,220"],
  [2, 6, "0,640 90,690"],
  [2, 6, "30,600 10,660"],
  [2, 7, "0,740 40,760"],
  [2, 6, "50,770 40,890"],
  [2, 7, "0,860 150,880 210,790 300,960 390,1040"],
  [2, 6, "100,860 80,960 0,1010"],
  [2, 6, "220,850 440,770"],
  [2, 6, "280,920 420,820 470,880"],
  [2, 6, "340,980 480,880"],
  [2, 6, "200,980 280,920"],
  [2, 6, "260,1040 310,980"],
  [2, 6, "180,590 350,830 300,840"],
  [2, 6, "250,560 380,740"],
  [2, 6, "190,610 260,570"],
  [2, 6, "210,640 290,590"],
  [2, 6, "230,670 320,620"],
  [2, 6, "260,730 350,670"],
  [2, 6, "300,760 370,710"],
  [2, 6, "330,800 400,750"],
  [2, 6, "220,930 320,1060"],
  [2, 6, "440,640 560,560 640,590"],
  [2, 7, "430,540 550,690 640,600 760,660"],
  [2, 6, "480,710 540,660"],
  [2, 6, "410,570 500,570 480,620 420,650"],
  [2, 6, "640,590 680,680"],
  [2, 6, "600,630 650,680"],
  [2, 7, "540,540 660,480 700,560"],
  [2, 6, "700,560 790,500"],
  [2, 6, "740,610 830,540"],
  [2, 7, "200,1240 320,1380 300,1440"],
  [2, 7, "260,1180 420,1020 500,1060"],
  [2, 6, "210,1240 380,1360 470,1360 550,1290"],
  [2, 6, "290,1190 350,1250 400,1180 500,1200 560,1150"],
  [2, 6, "260,1280 330,1220"],
  [2, 6, "380,1130 500,1170"],
  [2, 6, "420,1090 520,1140"],
  [2, 6, "330,1120 400,1210"],
  [2, 8, "470,980 550,1000 640,1120"],
  [2, 8, "600,960 660,1000 640,1090"],
  [2, 7, "530,1200 620,1330 720,1470"],
  [2, 7, "580,1140 680,1280 800,1470"],
  [2, 6, "540,1220 640,1150"],
  [2, 6, "560,1255 665,1180"],
  [2, 6, "580,1290 690,1210"],
  [2, 6, "610,1330 740,1240"],
  [2, 6, "630,1360 750,1275"],
  [2, 6, "650,1390 760,1310"],
  [2, 6, "670,1420 780,1345"],
  [2, 6, "690,1450 790,1380"],
  [2, 6, "640,1430 600,1340 560,1370"],
  [2, 6, "750,1200 800,1250"],
  [2, 7, "430,1470 640,1370 740,1530"],
  [2, 6, "470,1420 540,1510"],
  [2, 6, "510,1410 570,1500"],
  [2, 6, "550,1400 610,1480"],
  [2, 6, "430,1470 520,1500 600,1440"],
  [2, 6, "90,1330 220,1490"],
  [2, 6, "0,1420 60,1480 150,1400"],
  [2, 6, "130,1300 210,1250"],
  [2, 6, "60,1370 100,1420"],
  [2, 6, "170,1350 310,1460 240,1560"],
  [2, 6, "220,1420 330,1400"],
  [2, 6, "350,1510 430,1560"],
  [2, 6, "0,1240 70,1200"],
  [2, 6, "0,1290 90,1240"],
  [2, 6, "30,1220 60,1280"],
  [2, 6, "0,1050 80,1150"],
  [2, 6, "0,1120 50,1080"],
  [2, 6, "0,1180 90,1130"],
];

const hairlines: [number, string][] = [
  [1, "315,95 195,270 192,300 262,370 262,410 180,560 80,720 10,860"],
  [2, "0,1365 180,1215 400,1015 560,885 750,735 900,595 1100,415 1300,245 1568,30"],
];

const streets: [number, string, number, number, number, number, number][] = [
  [0, "Đường Quang Tiến", 20, 20, 490, 66, 212],
  [0, "Phố Sa Đôi", 20, 412, 700, 480, 552],
  [0, "Phố", 22, 738, 68, 775, 5],
  [0, "Phố Đại Linh", 20, 1078, 398, 1236, 470],
  [0, "Ngõ 28 Phố Đại Linh", 20, 1310, 510, 1555, 638],
  [0, "Ngõ 2 Sa Đôi", 20, 718, 650, 872, 738],
  [0, "Ngõ 24 Đường Đại Mỗ", 20, 842, 1215, 1050, 975],
  [0, "Ngõ 163 Đại Mỗ", 18, 655, 1426, 808, 1296],
  [0, "Đ. Louis 1", 18, 584, 1334, 682, 1256],
  [0, "Đ. Louis 2", 18, 672, 1196, 768, 1272],
  [0, "Phố Ngọc Trục", 20, 970, 1434, 1118, 1282],
  [0, "Sông Nhuệ", 29, 1530, 868, 1715, 990],
  [1, "Cầu", 24, 440, 60, 475, -20],
  [1, "Mộc Lan", 18, 678, 28, 766, 82],
  [1, "Đ. Hồ Mễ", 20, 1268, 70, 1400, -20],
  [1, "Hồ Mễ Trì", 28, 1030, 325, 1196, 422],
  [1, "Tố Hữu", 23, 1056, 640, 1156, 560],
  [1, "Tố Hữu", 23, 548, 1012, 646, 936],
  [1, "Tố Hữu", 23, 50, 1442, 148, 1364],
  [1, "Lương Thế Vinh", 23, 1140, 628, 1358, 784],
  [1, "Trung Văn", 23, 378, 892, 524, 988],
  [1, "Trung Văn", 20, 1288, 940, 1408, 860],
  [1, "Vũ Hữu", 18, 1528, 376, 1546, 276],
  [1, "Vũ Hữu", 18, 1516, 520, 1600, 548],
  [1, "Vũ Hữu", 18, 1536, 868, 1560, 764],
  [1, "Đ. Thanh Bình", 19, 322, 1396, 398, 1222],
  [1, "LK11B", 18, 484, 1276, 550, 1320],
  [1, "LK6A", 20, 634, 1406, 698, 1434],
  [1, "LK6B", 18, 926, 1508, 988, 1512],
  [1, "Ngõ Dâu", 18, 746, 1336, 840, 1376],
  [1, "Ngõ 67 Phùng Khoang", 18, 1056, 1380, 1320, 1368],
  [1, "Phùng Khoang", 17, 1350, 1330, 1356, 1528],
  [1, "Nguyễn Văn Lộc", 19, 434, 1534, 634, 1470],
  [1, "Vũ Trọng Khánh", 23, 238, 1334, 412, 1560],
  [2, "Đường vành đai 3", 27, 84, 182, 282, 486],
  [2, "Nguỵ Như Kon Tum", 20, 228, 306, 438, 130],
  [2, "Ng. 90 Khuất Duy Tiến", 18, 316, 444, 528, 264],
  [2, "Vũ Trọng Phụng", 20, 966, 196, 1084, 402],
  [2, "Cự Lộc", 18, 1382, 44, 1412, 130],
  [2, "Nguyễn Trãi", 24, 594, 862, 754, 722],
  [2, "P. Hạ Đình", 19, 726, 838, 810, 958],
  [2, "Ngõ 85", 19, 852, 962, 926, 902],
  [2, "Lương Thế Vinh", 23, 0, 976, 174, 1188],
  [2, "P. Vũ Tông Phan", 19, 1346, 1180, 1384, 930],
  [2, "Ng. 29 Khương Hạ", 17, 1502, 1130, 1526, 884],
  [2, "Khương Hạ", 20, 1452, 816, 1600, 870],
  [2, "Đường Khương Đình", 19, 1340, 310, 1428, 588],
  [2, "Trạm Nước", 20, 1160, 1556, 1325, 1556],
];

const places: [number, string, number, number, number][] = [
  [0, "XÓM ĐÌNH", 29, 252, 276],
  [0, "XÓM THÁP", 29, 114, 640],
  [0, "DAI MO", 26, 452, 1100],
  [0, "LÀNG NGỌC", 29, 1334, 1070],
  [0, "TRỤC", 29, 1336, 1128],
  [1, "KHU ĐÔ THỊ", 29, 308, 610],
  [1, "VINACONEX 3", 29, 308, 668],
  [1, "KHU ĐÔ THỊ", 29, 992, 830],
  [1, "TRUNG VĂN", 29, 992, 888],
  [1, "TRUNG VAN", 26, 592, 1160],
  [2, "VIEN KHOMUCS", 32, 494, 22],
  [2, "THANH", 35, 622, 480],
  [2, "XUÂN TRUNG", 35, 622, 548],
  [2, "THANH", 26, 168, 710],
  [2, "XUAN BAC", 26, 166, 764],
  [2, "HẠ ĐÌNH", 26, 1076, 1400],
  [2, "THANH", 26, 224, 1484],
  [2, "XUÂN NAM", 26, 222, 1540],
];

function StreetMap() {
  return (
    <section className="relative mt-[152px] h-[772px] overflow-hidden bg-[#f7f7f7]" aria-label="Map">
      <svg viewBox="0 0 2880 813" preserveAspectRatio="xMidYMid slice" className="size-full font-['Roboto']">
        {areas.map(([t, fill, s], i) => (
          <polygon key={i} points={line(t, s)} fill={fill} />
        ))}
        <g fill="none" strokeLinecap="round" strokeLinejoin="round">
          {rivers.map(([t, w, s], i) => (
            <polyline key={i} points={line(t, s)} stroke="#ececec" strokeWidth={w} />
          ))}
          {roads.map(([t, w, s], i) => (
            <polyline key={i} points={line(t, s)} stroke="#ffffff" strokeWidth={w < 8 ? w + 2 : w + 1} />
          ))}
          {hairlines.map(([t, s], i) => (
            <polyline key={i} points={line(t, s)} stroke="#ececec" strokeWidth="1.5" />
          ))}
        </g>
        <g className="[paint-order:stroke_fill]" stroke="#ffffff" strokeWidth="4" strokeLinejoin="round" textAnchor="middle">
          {streets.map(([t, text, size, x1, y1, x2, y2], i) => {
            const ax = px(t, x1);
            const ay = py(y1);
            const bx = px(t, x2);
            const by = py(y2);
            const angle = (Math.atan2(by - ay, bx - ax) * 180) / Math.PI;
            return (
              <text
                key={i}
                transform={`translate(${(ax + bx) / 2} ${(ay + by) / 2}) rotate(${angle})`}
                dominantBaseline="central"
                fontSize={size}
                fill="#858585"
                className="font-medium"
              >
                {text}
              </text>
            );
          })}
          {places.map(([t, text, size, x, y], i) => (
            <text
              key={i}
              x={px(t, x)}
              y={py(y)}
              fontSize={size}
              fill="#858585"
              className={size > 28 ? "font-bold tracking-[0.24em]" : "font-bold tracking-[0.18em]"}
            >
              {text}
            </text>
          ))}
        </g>
      </svg>
      <MdLocationOn className="absolute top-[297px] left-[51.4%] size-[76px] -translate-x-1/2 text-[#1fba54]" />
    </section>
  );
}

/* ---------- footer ---------- */

const products = ["Webcake", "Pancake V2", "POS Pancake", "Botcake", "PancakeStore"];

function Footer() {
  return (
    <footer className="text-[32px] leading-[48px]">
      <div className="bg-[#fafafa] pt-[121px] pb-[169px]">
        <div className="mx-auto grid w-full max-w-[2144px] grid-cols-[1096fr_547fr_501fr]">
          <div>
            <Logo large />
            <h3 className="mt-[65px] font-semibold">Hotline:</h3>
            <p className="mt-5 text-[29px]">+849.678.151.29</p>
            <h3 className="mt-[51px] font-semibold">Address:</h3>
            <p className="mt-5 pl-2">58 To Huu, Nam Tu Liem, Hanoi</p>
          </div>
          <div className="pt-[43px]">
            <h3 className="text-[48px] leading-[64px] font-bold">Our Products</h3>
            <ul className="mt-[22px] flex flex-col gap-7">
              {products.map((p) => (
                <li key={p}>
                  <a href="#">{p}</a>
                </li>
              ))}
            </ul>
          </div>
          <div className="pt-[43px]">
            <h3 className="text-[48px] leading-[64px] font-bold">Document</h3>
            <a href="#" className="mt-[22px] block">
              User guide
            </a>
            <h3 className="mt-[76px] text-[48px] leading-[64px] font-bold">Let's Contact</h3>
            <a href="#" className="mt-[22px] block">
              Support
            </a>
            <div className="mt-8 flex items-center gap-[30px] text-[#8c8c8c]">
              <a href="#" aria-label="Facebook">
                <AiFillFacebook className="size-[46px]" />
              </a>
              <a href="#" aria-label="Twitter" className="flex w-[46px] justify-center">
                <FaTwitter className="size-[42px]" />
              </a>
              <a href="#" aria-label="YouTube">
                <AiFillYoutube className="size-[46px]" />
              </a>
            </div>
          </div>
        </div>
      </div>
      <p className="flex h-[102px] items-center justify-center bg-[#262626] pl-[104px] text-[28px] font-semibold text-white">
        Copyright © 2020 Webcake
      </p>
    </footer>
  );
}

export default function App() {
  return (
    <div className="relative overflow-hidden bg-white pt-[76px] font-['Inter',sans-serif] text-[#262626]">
      <div className="absolute top-[613px] right-[37px] size-[577px] rounded-full bg-[#fffbf3]" />
      <div className="absolute top-[754px] -right-[53px] size-[232px] rounded-full bg-[#fff3df] mix-blend-multiply" />
      <Header />
      <main className="relative">
        <section className="mt-[171px] text-center">
          <h1 className="text-[98px] leading-[129px] font-bold">
            Webcake help center
            <span className="block text-white [-webkit-text-stroke:4px_#262626] [paint-order:stroke_fill]">
              Let’s connect with us!
            </span>
          </h1>
          <p className="mt-[43px] text-[32px] leading-[52px]">Just contact us or livechat if you need any support</p>
        </section>
        <section className="mx-auto mt-[209px] flex w-full max-w-[2144px] justify-between rounded-[57px] bg-[#fafafa] py-[137px] pr-[137px] pl-[184px]">
          <GetInTouch />
          <ContactForm />
        </section>
        <StreetMap />
      </main>
      <Footer />
    </div>
  );
}
